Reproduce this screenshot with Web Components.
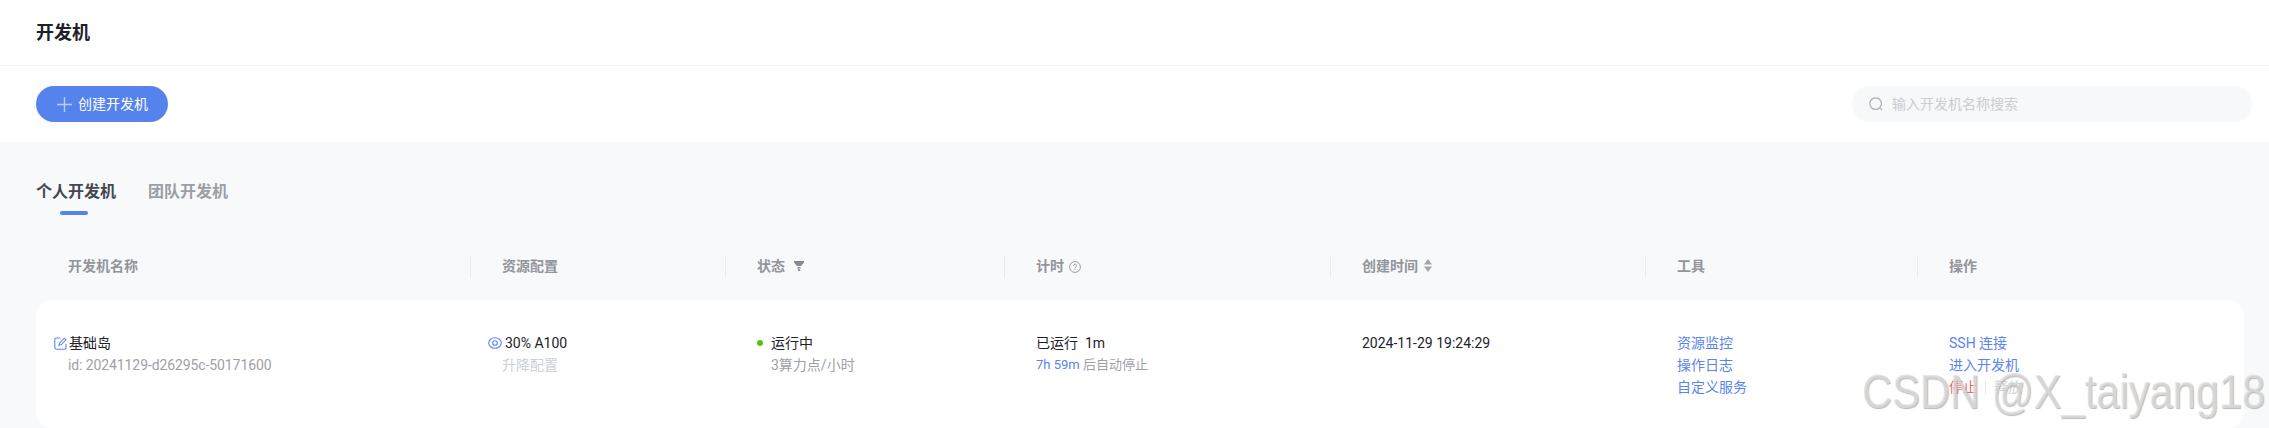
<!DOCTYPE html>
<html lang="zh">
<head>
<meta charset="utf-8">
<title>开发机</title>
<style>
  html, body { margin: 0; padding: 0; height: 100%; overflow: hidden; background: #f8f9fb; }
  body { font: 14px/22px Roboto, "Noto Sans CJK SC", sans-serif; color: #1d2129; }
</style>
</head>
<body>
<dev-page>
  <dev-header title="开发机"></dev-header>
  <dev-toolbar></dev-toolbar>
  <dev-content>
    <dev-tabs active="0" items="个人开发机,团队开发机"></dev-tabs>
    <dev-table-head></dev-table-head>
    <dev-row></dev-row>
  </dev-content>
</dev-page>
<dev-watermark text="CSDN @X_taiyang18"></dev-watermark>

<script>
// column widths shared by the table head and the rows
const COLS = '434px 255px 279px 326px 315px 272px 327px';

function define(name, css, html) {
  customElements.define(name, class extends HTMLElement {
    connectedCallback() {
      if (this.shadowRoot) return;
      this.attachShadow({ mode: 'open' });
      const body = typeof html === 'function' ? html(this) : html;
      this.shadowRoot.innerHTML = `<style>${css}</style>${body}`;
    }
  });
}

// -- icons --
const ICONS = {
  plus: '<svg width="15" height="15" viewBox="0 0 15 15"><path d="M7.5 0v15M0 7.5h15" stroke="#fff" stroke-opacity=".6" stroke-width="1.4" fill="none"/></svg>',
  search: '<svg width="14" height="14" viewBox="0 0 14 14" fill="none" stroke="#a9aeb8" stroke-width="1.2"><circle cx="6.6" cy="6.6" r="5.8"/><path d="M10.8 10.8l2.4 2.4"/></svg>',
  filter: '<svg class="filter" width="10" height="10" viewBox="0 0 10 10"><path d="M0 0h10v1.6L7 5H3L0 1.6zM3.4 6h3.2v1.4H3.4zM3.900 8.200h2.200V10H3.900z" fill="#86898f"/></svg>',
  help: '<svg class="help" width="12" height="12" viewBox="0 0 12 12" fill="none" stroke="#8f929a"><circle cx="6" cy="6" r="5.400" stroke-width=".9"/><path d="M4.400 4.800c0-2.100 3.300-2.100 3.300-.1 0 1.200-1.700 1.200-1.700 2.500" stroke-width=".9"/><path d="M6 8.100v1" stroke-width="1"/></svg>',
  sort: '<svg width="8" height="13" viewBox="0 0 8 13"><path d="M4 0l4 5.400H0zM4 13L0 7.600h8z" fill="#a3a6ad"/></svg>',
  edit: '<svg width="13" height="13" viewBox="0 0 13 13" fill="none" stroke="#5b84ee" stroke-width="1.1"><path d="M6.500 1H2.400A1.600 1.600 0 0 0 .8 2.600v8A1.600 1.600 0 0 0 2.400 12.200h8a1.600 1.600 0 0 0 1.600-1.600V7"/><path d="M5 8.200l.4-2L10.300 1.200l1.700 1.600L7 7.800z"/></svg>',
  eye: '<svg width="14" height="12" viewBox="0 0 14 12" fill="none" stroke="#5b84ee" stroke-width="1.1"><ellipse cx="7" cy="6" rx="6.300" ry="5.300"/><circle cx="7" cy="6" r="2.300"/></svg>',
};

// -- page shell --
define('dev-page', ':host { display: flex; flex-direction: column; width: 2269px; height: 428px; }', '<slot></slot>');

define('dev-header', `
  :host { display: flex; align-items: center; box-sizing: border-box; height: 66px; padding: 0 36px; background: #fff; border-bottom: 1px solid #f2f3f5; }
  h1 { margin: 0; font: 700 18px/24px Roboto, "Noto Sans CJK SC", sans-serif; color: #1d2129; }
`, el => `<h1>${el.getAttribute('title')}</h1>`);

define('dev-toolbar', `
  :host { display: flex; align-items: center; justify-content: space-between; box-sizing: border-box; height: 76px; padding: 0 17px 0 36px; background: #fff; }
  button { display: flex; align-items: center; gap: 6px; box-sizing: border-box; width: 132px; height: 36px; padding: 0 0 0 21px; border: 0; border-radius: 18px; background: #5583ee; color: #fff; font: 14px/22px Roboto, "Noto Sans CJK SC", sans-serif; }
  label { display: flex; align-items: center; gap: 9px; box-sizing: border-box; width: 400px; height: 36px; padding-left: 17px; border-radius: 18px; background: #f7f8fa; color: #c9cdd4; }
  svg { display: block; }
`, `<button>${ICONS.plus}<span>创建开发机</span></button><label>${ICONS.search}<span>输入开发机名称搜索</span></label>`);

define('dev-content', ':host { display: block; flex: 1; min-height: 0; padding: 0 25px 0 36px; }', '<slot></slot>');

define('dev-tabs', `
  :host { display: flex; gap: 32px; padding-top: 38px; height: 75px; box-sizing: content-box; }
  .tab { position: relative; height: 24px; font: 700 16px/24px Roboto, "Noto Sans CJK SC", sans-serif; color: #9b9ea5; }
  .tab.on { color: #44474f; }
  .tab.on::after { content: ""; position: absolute; left: 24px; top: 31px; width: 28px; height: 4px; border-radius: 2px; background: #5583ee; }
`, el => el.getAttribute('items').split(',').map((t, i) =>
  `<div class="tab${i == el.getAttribute('active') ? ' on' : ''}">${t}</div>`).join(''));

define('dev-table-head', `
  :host { display: grid; grid-template-columns: ${COLS}; height: 45px; align-items: start; }
  div { display: flex; align-items: center; gap: 6px; box-sizing: border-box; height: 23px; padding: 0 0 2px 31px; border-left: 1px solid #e9ebef; font-weight: 600; color: #92959c; }
  div:first-of-type { border-left: 0; padding-left: 32px; }
  svg { display: block; }
  .filter { margin-left: 3px; }
  .help { margin-left: -1px; margin-top: 2px; }
`, `<div>开发机名称</div><div>资源配置</div><div>状态 ${ICONS.filter}</div><div>计时 ${ICONS.help}</div><div>创建时间 ${ICONS.sort}</div><div>工具</div><div>操作</div>`);

define('dev-row', `
  :host { display: grid; grid-template-columns: ${COLS}; box-sizing: border-box; height: 128px; padding-top: 32px; background: #fff; border-radius: 16px; }
  .cell { padding-left: 32px; }
  .line { display: flex; align-items: center; height: 22px; white-space: pre; }
  .sub { color: #9ea1a8; }
  .id { letter-spacing: -.1px; }
  .small { font-size: 13px; }
  .faint { color: #cdd0d6; }
  .blue { color: #5b84ee; }
  .red { color: #f5635f; }
  .ic { margin-left: -14px; margin-right: 2px; display: flex; }
  .ic svg { display: block; }
  .eye { margin-left: -14px; margin-right: 3px; }
  .dot { width: 6px; height: 6px; margin-left: 0; margin-right: 8px; border-radius: 50%; background: #52c41a; }
  .indent { padding-left: 14px; }
  .sep { width: 1px; height: 13px; margin: 0 8px; background: #e5e6eb; }
`, `
  <div class="cell">
    <div class="line"><span class="ic">${ICONS.edit}</span>基础岛</div>
    <div class="line sub id">id: 20241129-d26295c-50171600</div>
  </div>
  <div class="cell">
    <div class="line"><span class="ic eye">${ICONS.eye}</span>30% A100</div>
    <div class="line faint">升降配置</div>
  </div>
  <div class="cell">
    <div class="line"><span class="dot"></span>运行中</div>
    <div class="line sub indent">3算力点/小时</div>
  </div>
  <div class="cell">
    <div class="line">已运行  1m</div>
    <div class="line sub small"><span class="blue">7h 59m</span> 后自动停止</div>
  </div>
  <div class="cell">
    <div class="line">2024-11-29 19:24:29</div>
  </div>
  <div class="cell">
    <div class="line blue">资源监控</div>
    <div class="line blue">操作日志</div>
    <div class="line blue">自定义服务</div>
  </div>
  <div class="cell">
    <div class="line blue">SSH 连接</div>
    <div class="line blue">进入开发机</div>
    <div class="line"><span class="red">停止</span><span class="sep"></span><span class="faint">释放</span></div>
  </div>
`);

// watermark sits over the table row
define('dev-watermark', `
  :host { position: absolute; left: 1862px; top: 367px; font: 48px/50px "Liberation Sans", Arial, sans-serif; color: rgba(224,224,224,.72); text-shadow: 1px 1px 1px rgba(140,140,140,.6); white-space: pre; pointer-events: none; transform: scaleX(.867); transform-origin: left top; }
`, el => el.getAttribute('text'));
</script>
</body>
</html>
